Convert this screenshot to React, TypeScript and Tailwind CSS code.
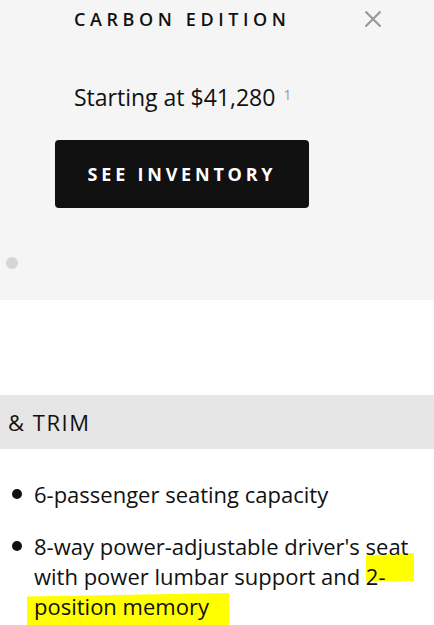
const font = { fontFamily: "'Open Sans', 'Noto Sans', sans-serif" };

export default function App() {
  return (
    <div className="w-[434px] h-[625px] overflow-hidden bg-white text-[#111]" style={font}>
      {/* Model card */}
      <div className="bg-[#f5f5f5] h-[300px] flex flex-col">
        <div className="flex items-center justify-between pl-[74px] pr-[52px] pt-[8px]">
          <h2 className="text-[18px] leading-[22px] font-semibold tracking-[0.255em] whitespace-nowrap">CARBON EDITION</h2>
          <svg width="18" height="18" viewBox="0 0 18 18" className="text-[#999]">
            <path d="M1.5 1.5 L16.5 16.5 M16.5 1.5 L1.5 16.5" stroke="currentColor" strokeWidth="2.2" fill="none" />
          </svg>
        </div>
        <p className="pl-[74px] mt-[52px] text-[23px] leading-[30px]">
          Starting at $41,280
          <sup className="ml-[8px] text-[14px] text-[#999] relative top-[-6px]">1</sup>
        </p>
        <button className="ml-[55px] mt-[28px] w-[254px] h-[68px] rounded-[4px] bg-[#111] text-white text-[18px] font-bold tracking-[0.21em]">
          SEE INVENTORY
        </button>
        <div className="ml-[6px] mt-[49px] w-[12px] h-[12px] rounded-full bg-[#d6d6d6]" />
      </div>

      <div className="h-[95px]" />

      {/* Section header */}
      <div className="bg-[#e6e6e6] h-[54px] flex items-center pl-[8px]">
        <span className="text-[22px] tracking-[0.07em]">&amp; TRIM</span>
      </div>

      {/* Features */}
      <ul className="relative pt-[30px] pl-[12px] flex flex-col gap-[22px] text-[22px] leading-[30px]">
        <li className="flex gap-[12px]">
          <span className="mt-[10px] w-[10px] h-[10px] rounded-full bg-[#111] shrink-0" />
          <span className="whitespace-nowrap">6-passenger seating capacity</span>
        </li>
        <li className="flex gap-[12px]">
          <span className="mt-[10px] w-[10px] h-[10px] rounded-full bg-[#111] shrink-0" />
          <span className="relative w-[400px] whitespace-nowrap">
            <span className="absolute left-[332px] top-[22px] w-[48px] h-[28px] bg-[#ffff00] [clip-path:polygon(0_8%,100%_0,100%_100%,0_100%)]" />
            <span className="absolute left-[-7px] top-[62px] w-[202px] h-[34px] bg-[#ffff00] [clip-path:polygon(0_10%,100%_0,100%_100%,0_100%)]" />
            <span className="relative">
              8-way power-adjustable driver's seat
              <br />
              with power lumbar support and 2-
              <br />
              position memory
            </span>
          </span>
        </li>
      </ul>
    </div>
  );
}
